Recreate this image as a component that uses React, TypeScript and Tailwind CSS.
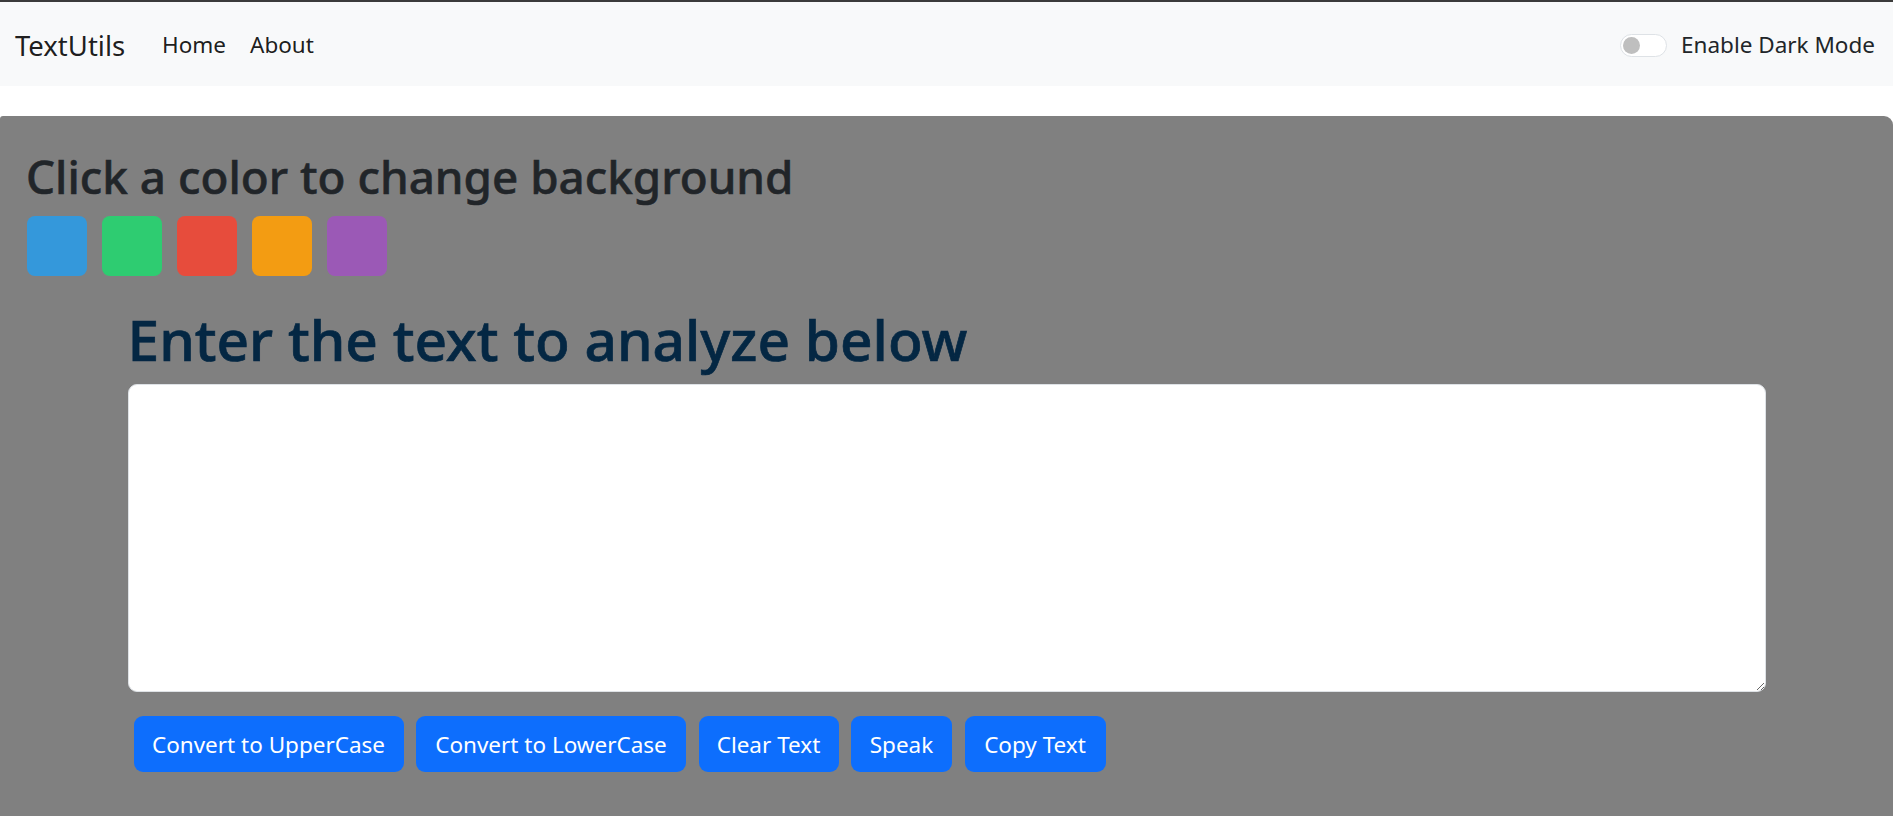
import { useState } from "react";

const SWATCHES = ["#3498db", "#2ecc71", "#e74c3c", "#f39c12", "#9b59b6"];

const BUTTONS = [
  { label: "Convert to UpperCase", width: "w-[270px]" },
  { label: "Convert to LowerCase", width: "w-[270px]" },
  { label: "Clear Text", width: "w-[140px]" },
  { label: "Speak", width: "w-[101px]" },
  { label: "Copy Text", width: "w-[141px]" },
];

const Navbar = () => (
  <nav className="flex h-[84px] items-center bg-[#f8f9fa] pl-[15px] pr-[18px] pt-[2px]">
    <a className="w-[147px] text-[27.5px] leading-[45px] text-black/90">TextUtils</a>
    <a className="w-[88px] text-[22.5px] leading-[36px] text-black/90">Home</a>
    <a className="text-[22.5px] leading-[36px] text-black/90">About</a>
    <div className="ml-auto flex items-center gap-[14px]">
      <span className="flex h-[23px] w-[47px] items-center rounded-full border border-[#dee2e6] bg-white px-[2px]">
        <span className="h-[17px] w-[17px] rounded-full bg-[#bfbfbf]" />
      </span>
      <label className="text-[22.5px] leading-[36px] text-[#212529]">Enable Dark Mode</label>
    </div>
  </nav>
);

export default function App() {
  const [text, setText] = useState("");

  return (
    <div className="min-h-[816px] bg-white font-['Noto_Sans','Open_Sans',sans-serif]">
      <div className="h-[2px] bg-[#3b3b3b]" />
      <Navbar />
      <main className="mt-[30px] min-h-[700px] rounded-tl-[3px] rounded-tr-[9px] bg-[#808080] p-[24px]">
        <h2 className="ml-[2px] mt-[8.4px] text-[45.8px] font-medium leading-[57.6px] text-[#212529] [-webkit-text-stroke:0.55px_#212529]">
          Click a color to change background
        </h2>
        <div className="ml-[3px] mt-[10px] flex gap-[15px]">
          {SWATCHES.map((c) => (
            <button
              key={c}
              className="h-[60px] w-[60px] rounded-[8px]"
              style={{ backgroundColor: c }}
            />
          ))}
        </div>
        <div className="mx-auto w-[1638px]">
          <h1 className="mb-[9px] mt-[27px] text-[56.8px] font-medium leading-[72px] text-[#042743] [-webkit-text-stroke:0.7px_#042743]">
            Enter the text to analyze below
          </h1>
          <textarea
            className="block h-[308px] w-full rounded-[9px] border border-[#dee2e6] bg-white px-[18px] py-[9px] text-[24px] outline-none"
            value={text}
            onChange={(e) => setText(e.target.value)}
          />
          <div className="mt-[24px] flex gap-[12.5px] pl-[6px]">
            {BUTTONS.map((b) => (
              <button
                key={b.label}
                className={`${b.width} h-[56.5px] rounded-[9px] bg-[#0d6efd] pt-[2px] text-[22.5px] leading-[36px] text-white`}
              >
                {b.label}
              </button>
            ))}
          </div>
        </div>
      </main>
    </div>
  );
}
